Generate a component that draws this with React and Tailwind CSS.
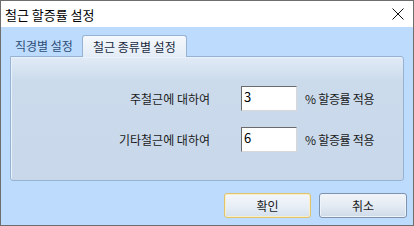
import React from "react";

const font = { fontFamily: '"Noto Sans CJK KR", "Noto Sans", sans-serif' };

function Row({ label, value }) {
  return (
    <div className="flex items-center h-[25px]">
      <div className="w-[199px] text-right text-[12px] text-[#1a1a1a] leading-none">{label}</div>
      <div className="ml-[31px] w-[56px] h-[25px] bg-white border border-t-[#6a6a6a] border-l-[#6a6a6a] border-r-[#d8d8d8] border-b-[#d8d8d8] px-[2px] pt-[2px] text-[13px] leading-[16px] text-black">
        {value}
      </div>
      <div className="ml-[8px] text-[12px] text-[#1a1a1a] leading-none tracking-[-0.3px]">% 할증률 적용</div>
    </div>
  );
}

export default function App() {
  return (
    <div style={font} className="w-[414px] h-[226px] border border-[#6e6e6e] flex flex-col overflow-hidden select-none">
      <div className="h-[26px] bg-white flex items-center justify-between pl-[4px] pr-[9px]">
        <span className="text-[13px] text-black leading-none">철근 할증률 설정</span>
        <svg width="12" height="12" viewBox="0 0 12 12" className="mt-[-1px]">
          <path d="M0.5 0.5 L11.5 11.5 M11.5 0.5 L0.5 11.5" stroke="#111" strokeWidth="1" fill="none" />
        </svg>
      </div>
      <div className="flex-1 bg-[#bddbfc] px-[9px] pt-[6px] flex flex-col">
        <div className="h-[23px] flex items-end">
          <div className="h-[20px] pl-[5px] pr-[9px] flex items-center text-[12px] text-[#2c4e78] leading-none">직경별 설정</div>
          <div className="h-[22px] w-[105px] flex items-center justify-center text-[12px] text-[#1a2a40] leading-none border border-b-0 border-[#98b3d2] rounded-t-[3px] bg-gradient-to-b from-[#f6f9fd] to-[#e3ecf6] relative top-[1px] z-10">
            철근 종류별 설정
          </div>
        </div>
        <div className="h-[125px] border border-[#98b3d2] rounded-b-[3px] rounded-tr-[3px] bg-gradient-to-b from-[#e1ebf6] via-[#cbdbec] via-[20%] to-[#c8d8ea] flex flex-col pt-[29px] gap-[16px] shadow-[inset_1px_1px_0_#e8f2fc]">
          <Row label="주철근에 대하여" value="3" />
          <Row label="기타철근에 대하여" value="6" />
        </div>
        <div className="mt-[12px] -mr-[3px] flex justify-end gap-[8px]">
          <button className="w-[87px] h-[25px] rounded-[3px] border border-[#e0c36a] bg-gradient-to-b from-[#f4f7fb] via-[#e9eff6] to-[#d5e1ee] text-[12px] text-[#1a1a1a] leading-none shadow-[inset_0_0_0_1px_#f8eec8]">
            확인
          </button>
          <button className="w-[88px] h-[25px] rounded-[3px] border border-[#7f93ad] bg-gradient-to-b from-[#f2f5f9] via-[#e4ebf3] to-[#cfdbe9] text-[12px] text-[#1a1a1a] leading-none shadow-[inset_0_0_0_1px_#eef3f9]">
            취소
          </button>
        </div>
      </div>
    </div>
  );
}
